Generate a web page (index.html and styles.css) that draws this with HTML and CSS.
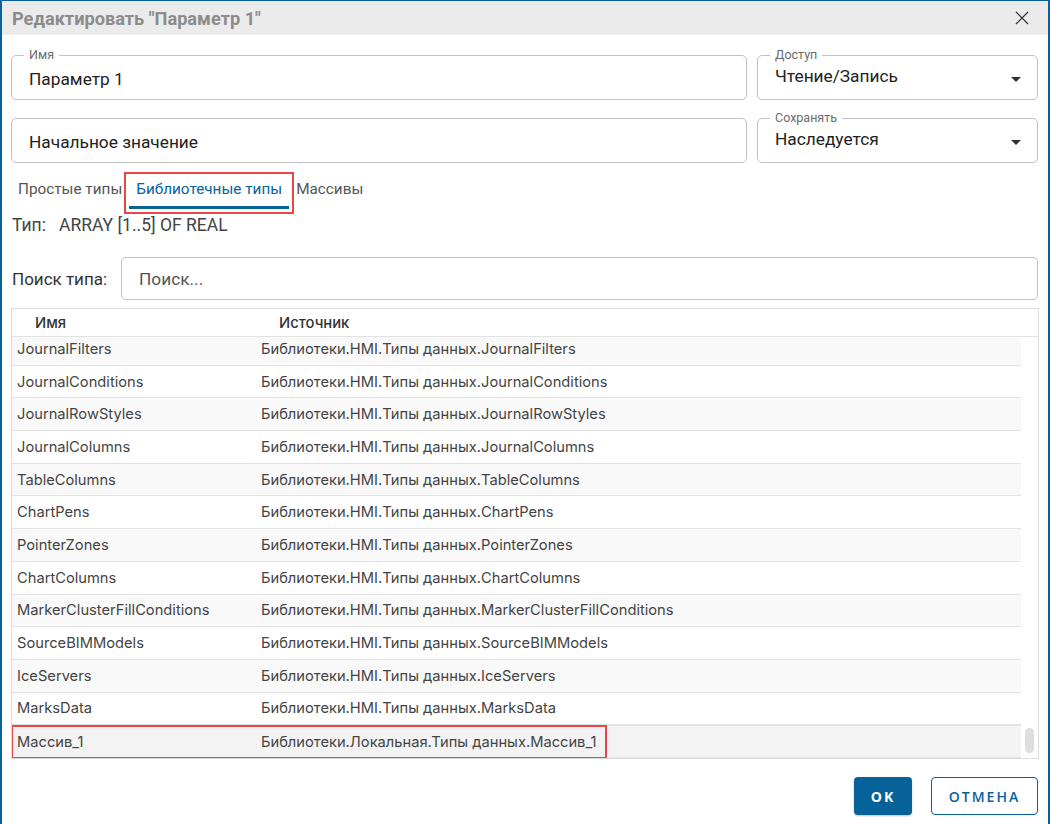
FILE: index.html
```html
<!DOCTYPE html>
<html lang="ru">
<head>
    <meta charset="UTF-8">
    <meta name="viewport" content="width=device-width, initial-scale=1.0">
    <title>Редактировать параметр</title>
    <link rel="stylesheet" href="styles.css">
</head>
<body>
    <div class="dialog">
        <div class="dialog-title">
            <span>Редактировать "Параметр 1"</span>
            <svg class="close-icon" width="14" height="14" viewBox="0 0 14 14">
                <path d="M1 1 L13 13 M13 1 L1 13" stroke="#333" stroke-width="1.2" fill="none"/>
            </svg>
        </div>

        <div class="dialog-body">
            <div class="field-row">
                <div class="field field-wide">
                    <span class="field-label">Имя</span>
                    <span class="field-value">Параметр 1</span>
                </div>
                <div class="field field-select">
                    <span class="field-label">Доступ</span>
                    <span class="field-value">Чтение/Запись</span>
                    <span class="caret"></span>
                </div>
            </div>

            <div class="field-row">
                <div class="field field-wide">
                    <span class="field-value placeholder">Начальное значение</span>
                </div>
                <div class="field field-select">
                    <span class="field-label">Сохранять</span>
                    <span class="field-value">Наследуется</span>
                    <span class="caret"></span>
                </div>
            </div>

            <div class="tabs">
                <div class="tab">Простые типы</div>
                <div class="tab active">Библиотечные типы</div>
                <div class="tab">Массивы</div>
            </div>

            <div class="type-line">
                <span class="type-label">Тип:</span>
                <span>ARRAY [1..5] OF REAL</span>
            </div>

            <div class="search-row">
                <span class="search-label">Поиск типа:</span>
                <div class="search-input">Поиск...</div>
            </div>

            <div class="grid">
                <div class="grid-head">
                    <div class="col-name">Имя</div>
                    <div class="col-source">Источник</div>
                </div>
                <div class="grid-viewport">
                    <div class="grid-rows">
                        <div class="grid-row"><div class="col-name">JournalFilters</div><div class="col-source">Библиотеки.HMI.Типы данных.JournalFilters</div></div>
                        <div class="grid-row"><div class="col-name">JournalConditions</div><div class="col-source">Библиотеки.HMI.Типы данных.JournalConditions</div></div>
                        <div class="grid-row"><div class="col-name">JournalRowStyles</div><div class="col-source">Библиотеки.HMI.Типы данных.JournalRowStyles</div></div>
                        <div class="grid-row"><div class="col-name">JournalColumns</div><div class="col-source">Библиотеки.HMI.Типы данных.JournalColumns</div></div>
                        <div class="grid-row"><div class="col-name">TableColumns</div><div class="col-source">Библиотеки.HMI.Типы данных.TableColumns</div></div>
                        <div class="grid-row"><div class="col-name">ChartPens</div><div class="col-source">Библиотеки.HMI.Типы данных.ChartPens</div></div>
                        <div class="grid-row"><div class="col-name">PointerZones</div><div class="col-source">Библиотеки.HMI.Типы данных.PointerZones</div></div>
                        <div class="grid-row"><div class="col-name">ChartColumns</div><div class="col-source">Библиотеки.HMI.Типы данных.ChartColumns</div></div>
                        <div class="grid-row"><div class="col-name">MarkerClusterFillConditions</div><div class="col-source">Библиотеки.HMI.Типы данных.MarkerClusterFillConditions</div></div>
                        <div class="grid-row"><div class="col-name">SourceBIMModels</div><div class="col-source">Библиотеки.HMI.Типы данных.SourceBIMModels</div></div>
                        <div class="grid-row"><div class="col-name">IceServers</div><div class="col-source">Библиотеки.HMI.Типы данных.IceServers</div></div>
                        <div class="grid-row"><div class="col-name">MarksData</div><div class="col-source">Библиотеки.HMI.Типы данных.MarksData</div></div>
                        <div class="grid-row selected"><div class="col-name">Массив_1</div><div class="col-source">Библиотеки.Локальная.Типы данных.Массив_1</div><span class="highlight-box"></span></div>
                    </div>
                    <div class="scrollbar"><span class="scroll-thumb"></span></div>
                </div>
            </div>

            <div class="actions">
                <button type="button" class="btn btn-primary">OK</button>
                <button type="button" class="btn btn-outline">ОТМЕНА</button>
            </div>
        </div>
    </div>
</body>
</html>
```

FILE: styles.css
```css
:root {
    --blue: #07629a;
    --border-color: #c2c2c2;
    --line-color: #e2e2e2;
    --text-color: #2b2b2b;
    --mark-color: #e8464a;
}

* {
    margin: 0;
    padding: 0;
    box-sizing: border-box;
}

body {
    font-family: Roboto, "Liberation Sans", sans-serif;
    color: var(--text-color);
    background: #fff;
}

.dialog {
    width: 1050px;
    height: 824px;
    border-top: 1px solid var(--blue);
    border-left: 2px solid var(--blue);
    border-right: 2px solid var(--blue);
    background: #fff;
}

.dialog-title {
    height: 34px;
    background: #ebebeb;
    display: flex;
    align-items: center;
    justify-content: space-between;
    padding: 0 19px 0 10px;
    font-size: 18.2px;
    font-weight: 700;
    color: #8c8c8c;
}

.dialog-body {
    padding: 20px 10px 0 9px;
}

.field-row {
    display: flex;
    gap: 10px;
    margin-bottom: 18px;
}

.field {
    position: relative;
    height: 45px;
    border: 1px solid var(--border-color);
    border-radius: 5px;
    display: flex;
    align-items: center;
    padding: 0 17px;
}

.field-wide {
    flex: 1;
}

.field-select {
    width: 281px;
}

.field-label {
    position: absolute;
    left: 12px;
    top: -8px;
    padding: 0 5px;
    background: #fff;
    font-size: 12.5px;
    line-height: 14px;
    color: #6a6a6a;
}

.field-value {
    font-size: 17.3px;
    color: #222;
    padding-top: 2px;
}

.field-select .field-value {
    padding-top: 0;
    margin-top: -3px;
}

.caret {
    position: absolute;
    right: 16px;
    top: 21px;
    width: 0;
    height: 0;
    border-left: 5px solid transparent;
    border-right: 5px solid transparent;
    border-top: 5px solid #333;
}

.tabs {
    display: flex;
    margin-top: -4px;
}

.tab {
    padding: 2px 7px 7px;
    line-height: 20px;
    font-size: 15.3px;
    color: #555;
    border-bottom: 3px solid transparent;
}

.tab.active {
    color: var(--blue);
    border-bottom-color: var(--blue);
    outline: 2px solid var(--mark-color);
    outline-offset: 3px;
}

.type-line {
    display: flex;
    margin-top: 6px;
    line-height: 20px;
    font-size: 17.5px;
    color: #444;
}

.type-label {
    width: 48px;
    padding-left: 1px;
}

.search-row {
    display: flex;
    align-items: center;
    margin-top: 22px;
}

.search-label {
    width: 110px;
    padding-left: 1px;
    font-size: 17px;
    color: #333;
}

.search-input {
    flex: 1;
    height: 43px;
    border: 1px solid var(--border-color);
    border-radius: 5px;
    padding: 0 17px;
    display: flex;
    align-items: center;
    font-size: 17.3px;
    color: #555;
}

.grid {
    margin-top: 8px;
    margin-right: -1px;
    border: 1px solid #dcdcdc;
    font-family: Inter, Roboto, sans-serif;
}

.grid-head {
    display: flex;
    height: 28px;
    align-items: center;
    border-bottom: 1px solid var(--line-color);
    font-size: 14.8px;
    font-weight: 500;
    color: #333;
}

.grid-head .col-name,
.grid-head .col-source {
    padding-left: 23px;
}

.col-name {
    width: 244px;
    padding-left: 5px;
}

.col-source {
    flex: 1;
    padding-left: 5px;
}

.grid-viewport {
    display: flex;
    height: 421px;
    overflow: hidden;
}

.grid-rows {
    flex: 1;
    margin-top: -4px;
}

.grid-row {
    position: relative;
    display: flex;
    align-items: center;
    height: 32.7px;
    border-bottom: 1px solid var(--line-color);
    font-size: 14.7px;
    color: #444;
}

.grid-row:nth-child(odd) {
    background: #f9f9f9;
}

.grid-row.selected {
    background: #f3f3f3;
    border-top: 1px solid var(--line-color);
}

.highlight-box {
    position: absolute;
    left: -1px;
    top: -1px;
    width: 596px;
    height: 34px;
    border: 2px solid var(--mark-color);
}

.scrollbar {
    width: 17px;
    position: relative;
}

.scroll-thumb {
    position: absolute;
    left: 4px;
    bottom: 5px;
    width: 9px;
    height: 25px;
    border-radius: 5px;
    background: #dedede;
}

.actions {
    display: flex;
    justify-content: flex-end;
    gap: 19px;
    margin-top: 18px;
}

.btn {
    height: 38px;
    border-radius: 4px;
    font-family: "Open Sans", sans-serif;
    font-size: 14px;
    font-weight: 700;
    letter-spacing: 2px;
    cursor: pointer;
}

.btn-primary {
    width: 58px;
    background: var(--blue);
    color: #fff;
    border: none;
    box-shadow: 0 1px 2px rgba(0, 0, 0, 0.25);
}

.btn-outline {
    width: 107px;
    background: #fff;
    color: var(--blue);
    border: 1.5px solid var(--blue);
    font-weight: 600;
}
```
